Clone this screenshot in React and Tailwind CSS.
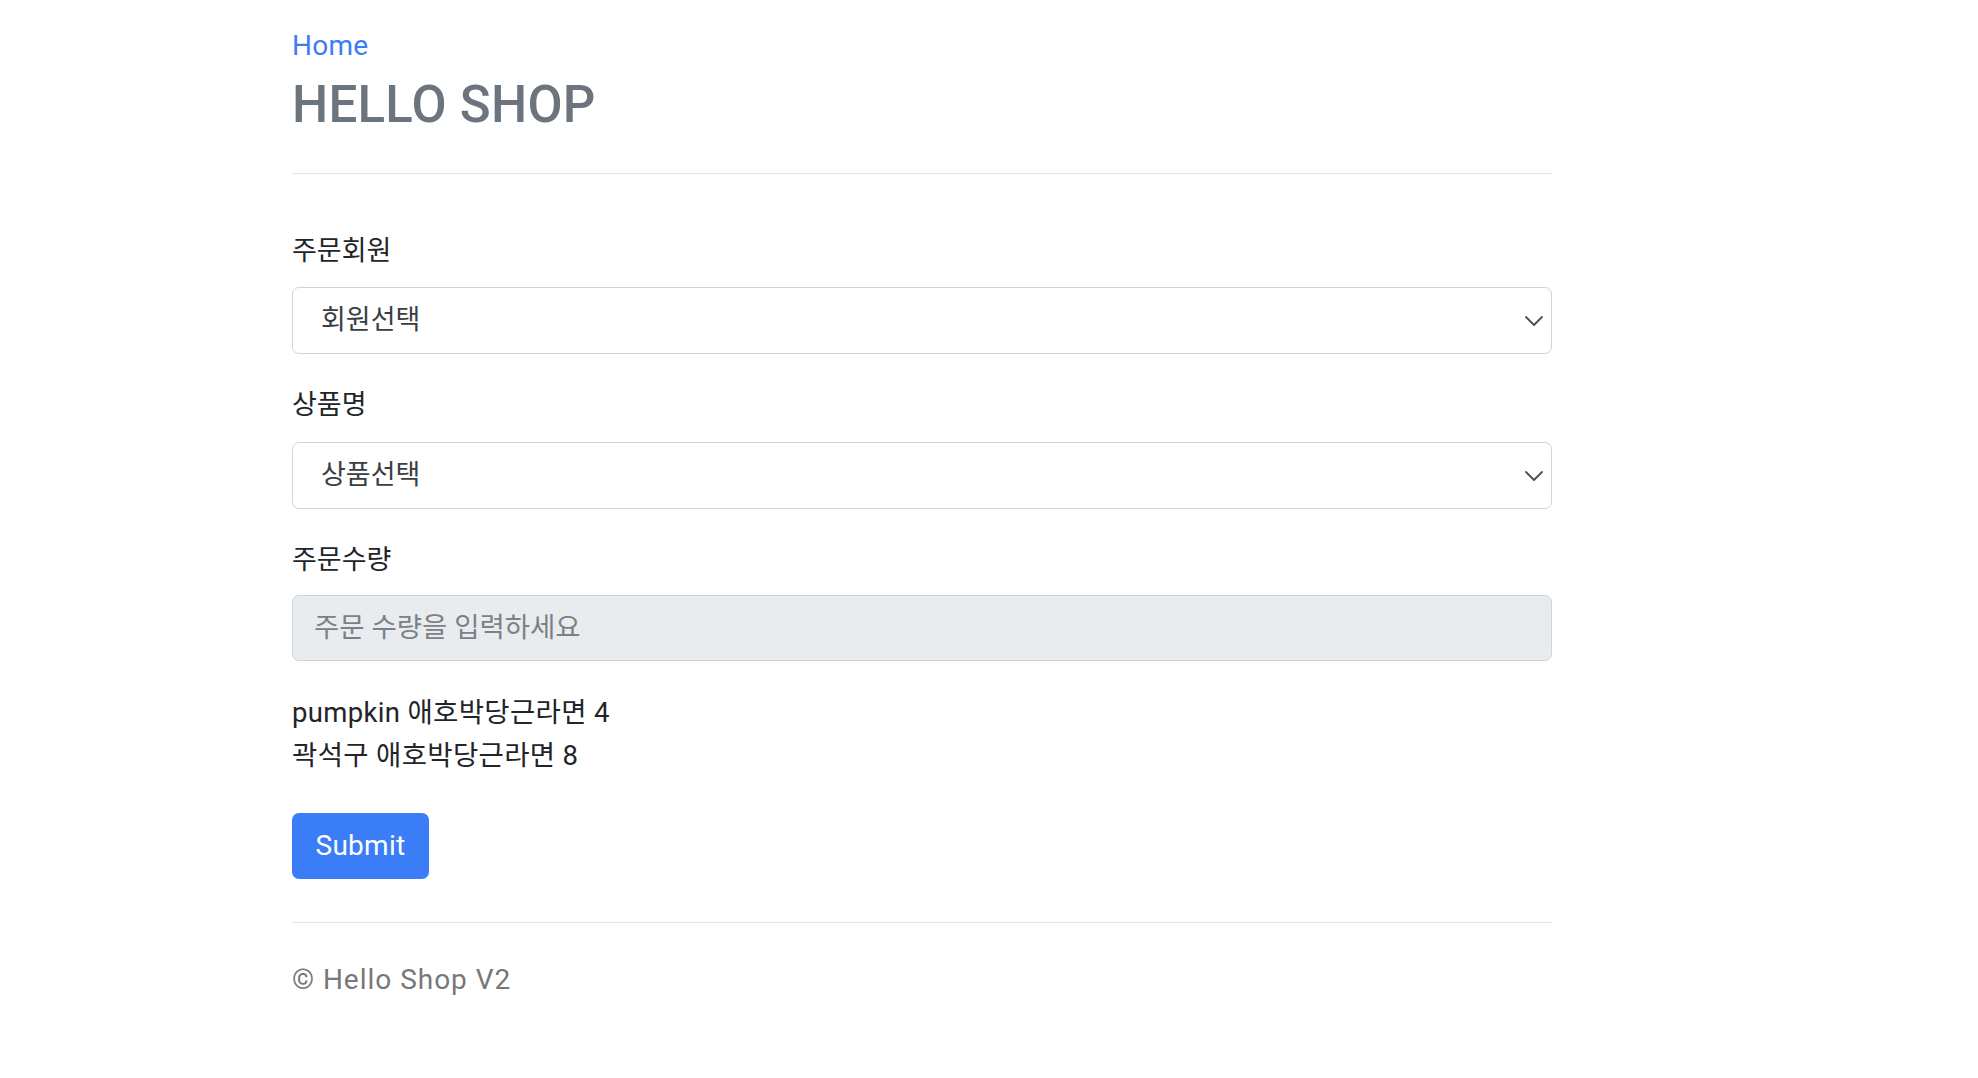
// Order form page: header, member/item selects, quantity input, order list, footer
const FONT = { fontFamily: 'Roboto, "Noto Sans CJK KR", sans-serif' };

const Chevron = () => (
  <svg width="18" height="10" viewBox="0 0 18 10" fill="none" className="absolute right-[8px] top-1/2 -translate-y-1/2">
    <path d="M1 1l8 8 8-8" stroke="#4a4f55" strokeWidth="1.8" strokeLinecap="round" strokeLinejoin="round" />
  </svg>
);

const Select = ({ placeholder }) => (
  <div className="relative h-[67px] w-full rounded-[7px] border border-[#ced4da] bg-white flex items-center pl-[28px]">
    <span className="text-[27px] text-[#3a3e43]">{placeholder}</span>
    <Chevron />
  </div>
);

const orders = ['pumpkin 애호박당근라면 4', '곽석구 애호박당근라면 8'];

export default function App() {
  return (
    <div className="min-h-screen bg-white text-[#212529]" style={FONT}>
      <div className="ml-[292px] w-[1260px] pt-[26px]">
        <a className="block text-[28px] leading-[40px] tracking-[0.01em] text-[#3b7df6]">Home</a>
        <h3 className="mt-[9px] text-[51px] leading-[60px] font-medium tracking-[0.005em] text-[#6c757d]">HELLO SHOP</h3>
        <hr className="mt-[38px] border-t border-[#e3e5e8]" />

        <form className="mt-[57px]">
          <label className="block text-[27px] leading-[40px]">주문회원</label>
          <div className="mt-[16px]">
            <Select placeholder="회원선택" />
          </div>

          <label className="block mt-[31px] text-[27px] leading-[40px]">상품명</label>
          <div className="mt-[17px]">
            <Select placeholder="상품선택" />
          </div>

          <label className="block mt-[31px] text-[27px] leading-[40px]">주문수량</label>
          <div className="mt-[15px] h-[66px] w-full rounded-[7px] border border-[#ced4da] bg-[#e9ecef] flex items-center pl-[21px]">
            <span className="text-[27.5px] text-[#7b8187]">주문 수량을 입력하세요</span>
          </div>

          <div className="mt-[30px]">
            {orders.map((o) => (
              <div key={o} className="text-[27.5px] leading-[43px] tracking-[0.012em]">{o}</div>
            ))}
          </div>

          <button
            type="button"
            className="mt-[36px] h-[66px] w-[137px] rounded-[7px] bg-[#3b7df6] text-white text-[28px] tracking-[0.01em]"
          >
            Submit
          </button>
        </form>

        <hr className="mt-[43px] border-t border-[#e3e5e8]" />
        <footer className="mt-[37px] text-[28px] leading-[40px] tracking-[0.035em] text-[#75787b]">© Hello Shop V2</footer>
      </div>
    </div>
  );
}
